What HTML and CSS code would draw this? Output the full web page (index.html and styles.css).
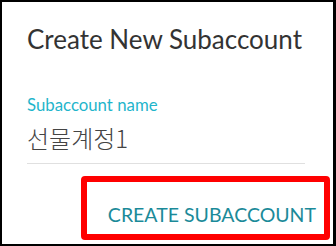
FILE: index.html
```html
<!DOCTYPE html>
<html>
<head>
<meta charset="utf-8">
<link rel="stylesheet" href="styles.css">
</head>
<body>
<div class="frame">
  <h1 class="title">Create New Subaccount</h1>
  <div class="field">
    <label class="label">Subaccount name</label>
    <div class="input">선물계정1</div>
  </div>
  <div class="actions">
    <div class="highlight">
      <button class="btn">CREATE SUBACCOUNT</button>
    </div>
  </div>
</div>
</body>
</html>
```

FILE: styles.css
```css
html, body {
  margin: 0;
  padding: 0;
  background: #fff;
}
.frame {
  box-sizing: border-box;
  width: 336px;
  height: 246px;
  border-style: solid;
  border-color: #000;
  border-width: 2px 3px 2px 2px;
  display: flex;
  flex-direction: column;
  font-family: Lato, "Noto Sans CJK KR", sans-serif;
  overflow: hidden;
}
.title {
  margin: 20px 0 0 25px;
  font-size: 26px;
  font-weight: 400;
  line-height: 34px;
  color: #333;
}
.field {
  margin: 39px 0 0 25px;
  width: 278px;
  display: flex;
  flex-direction: column;
}
.label {
  font-size: 16.8px;
  line-height: 20px;
  color: #1fb5cb;
}
.input {
  margin-top: 8px;
  font-size: 24px;
  line-height: 30px;
  color: #444;
  padding-bottom: 10px;
  border-bottom: 1px solid #e0e0e0;
  font-family: "Noto Sans CJK KR", sans-serif;
  font-weight: 300;
}
.actions {
  display: flex;
  justify-content: flex-end;
  margin-top: 12px;
  margin-right: 3px;
}
.highlight {
  border: 6px solid #f00;
  border-radius: 4px;
  width: 237px;
  height: 52px;
  display: flex;
  align-items: center;
  justify-content: flex-end;
}
.btn {
  border: 0;
  background: none;
  padding: 12px 8px 0 0;
  font-family: Lato, sans-serif;
  font-size: 19.5px;
  color: #1b8a99;
  cursor: pointer;
}
```
